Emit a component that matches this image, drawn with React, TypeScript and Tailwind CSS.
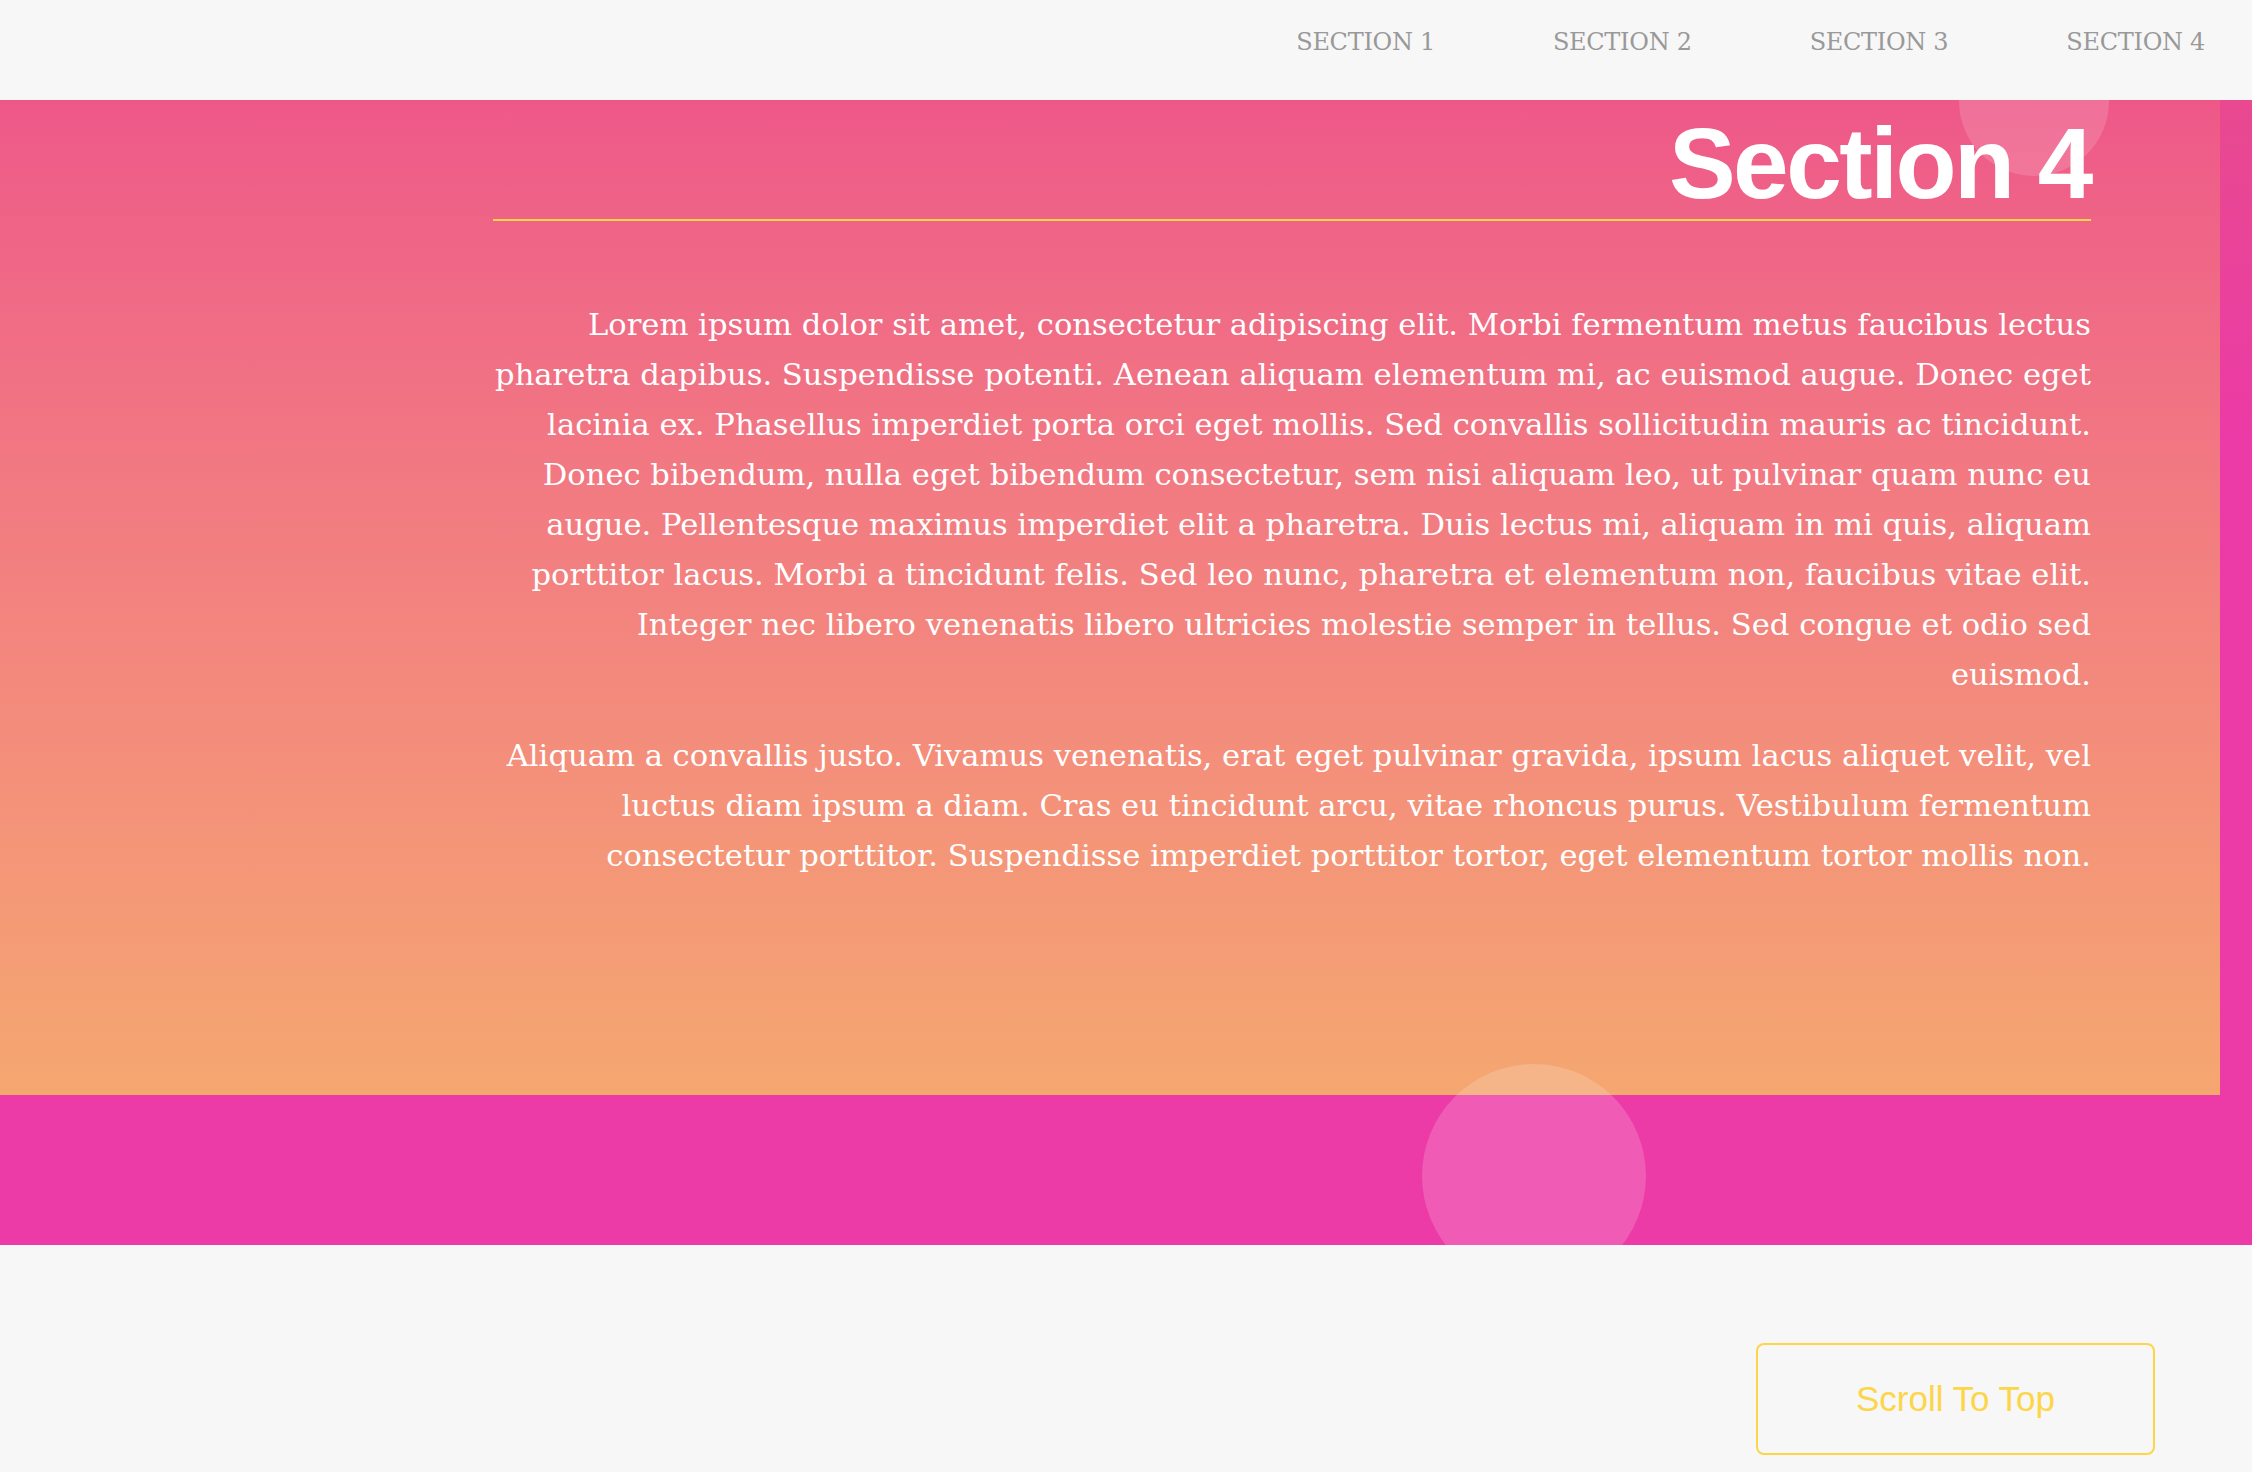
const navItems = ["SECTION 1", "SECTION 2", "SECTION 3", "SECTION 4"];

const paragraphs = [
  [
    "Lorem ipsum dolor sit amet, consectetur adipiscing elit. Morbi fermentum metus faucibus lectus",
    "pharetra dapibus. Suspendisse potenti. Aenean aliquam elementum mi, ac euismod augue. Donec eget",
    "lacinia ex. Phasellus imperdiet porta orci eget mollis. Sed convallis sollicitudin mauris ac tincidunt.",
    "Donec bibendum, nulla eget bibendum consectetur, sem nisi aliquam leo, ut pulvinar quam nunc eu",
    "augue. Pellentesque maximus imperdiet elit a pharetra. Duis lectus mi, aliquam in mi quis, aliquam",
    "porttitor lacus. Morbi a tincidunt felis. Sed leo nunc, pharetra et elementum non, faucibus vitae elit.",
    "Integer nec libero venenatis libero ultricies molestie semper in tellus. Sed congue et odio sed",
    "euismod.",
  ],
  [
    "Aliquam a convallis justo. Vivamus venenatis, erat eget pulvinar gravida, ipsum lacus aliquet velit, vel",
    "luctus diam ipsum a diam. Cras eu tincidunt arcu, vitae rhoncus purus. Vestibulum fermentum",
    "consectetur porttitor. Suspendisse imperdiet porttitor tortor, eget elementum tortor mollis non.",
  ],
];

function Header() {
  return (
    <header className="flex h-[100px] items-start justify-end gap-[118px] bg-[#f7f7f7] pr-[47px] pt-[24px]">
      {navItems.map((item) => (
        <a
          key={item}
          href="#"
          className="font-['DejaVu_Serif',serif] text-[24px] leading-[36px] tracking-[-0.3px] text-[#999999]"
        >
          {item}
        </a>
      ))}
    </header>
  );
}

function SectionFour() {
  return (
    <section className="relative h-[1145px] overflow-hidden bg-linear-to-b from-[#e8498f] to-[#ec3aa6] to-30%">
      <div className="h-[995px] w-[2220px] bg-linear-to-b from-[#ee5889] to-[#f5a770] pl-[493px] pr-[129px]">
        <h1 className="border-b-2 border-[#f9d64a] pb-[6px] pt-[13px] text-right font-['Liberation_Sans',Arial,sans-serif] text-[100px] font-bold leading-none tracking-[-2.5px] text-white">
          Section 4
        </h1>
        <div className="relative z-10 mt-[79px] font-['DejaVu_Serif',serif] text-[30.6px] leading-[50px] text-white">
          {paragraphs.map((lines, i) => (
            <p key={i} className={i > 0 ? "mt-[31px]" : ""}>
              {lines.map((line) => (
                <span key={line} className="flex justify-end whitespace-nowrap">
                  {line}
                </span>
              ))}
            </p>
          ))}
        </div>
      </div>

      {/* decorative bubbles */}
      <div className="absolute left-[1959px] top-[-74px] h-[150px] w-[150px] rounded-full bg-white/15" />
      <div className="absolute left-[1422px] top-[964px] h-[224px] w-[224px] rounded-full bg-white/[0.17]" />
    </section>
  );
}

export default function App() {
  return (
    <div className="min-h-screen bg-[#f7f7f7]">
      <Header />
      <SectionFour />
      <div className="flex justify-end pb-[40px] pr-[97px] pt-[98px]">
        <button className="h-[112px] w-[399px] rounded-[8px] border-2 border-[#fcd648] font-['Liberation_Sans',Arial,sans-serif] text-[35px] text-[#fcd648]">
          Scroll To Top
        </button>
      </div>
    </div>
  );
}
